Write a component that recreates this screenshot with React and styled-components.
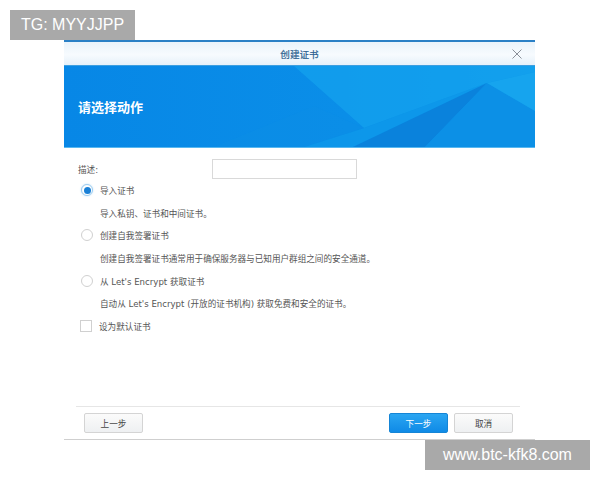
import styled, { createGlobalStyle } from "styled-components";

const GlobalStyle = createGlobalStyle`
  html, body {
    margin: 0;
    padding: 0;
    background: #ffffff;
  }
  body {
    font-family: "DejaVu Sans", "Noto Sans CJK SC", sans-serif;
  }
`;

const Page = styled.div`
  position: relative;
  width: 600px;
  height: 480px;
  overflow: hidden;
  padding: 40px 0 0 64px;
  box-sizing: border-box;
`;

const Watermark = styled.div`
  position: absolute;
  left: ${(p) => p.left}px;
  top: ${(p) => p.top}px;
  width: ${(p) => p.width}px;
  height: 30px;
  background: #a9a9a9;
  color: #ffffff;
  font-family: "Liberation Sans", sans-serif;
  font-size: 16px;
  display: flex;
  align-items: center;
  justify-content: center;
`;

const Dialog = styled.div`
  width: 471px;
  display: flex;
  flex-direction: column;
  border-top: 2px solid #2a80c6;
  border-bottom: 1px solid #cfcfcf;
  background: #ffffff;
`;

const TitleBar = styled.div`
  height: 23px;
  display: grid;
  grid-template-columns: 40px 1fr 40px;
  align-items: center;
  background: linear-gradient(#e9f3fb, #f7fbfe 55%, #e6f1fa);
  border-bottom: 1px solid #3d9fe0;
`;

const Title = styled.div`
  grid-column: 2;
  text-align: center;
  font-size: 9.6px;
  color: #2b5f8f;
  -webkit-text-stroke: 0.2px #2b5f8f;
`;

const Close = styled.div`
  grid-column: 3;
  justify-self: end;
  margin-right: 13px;
  width: 10px;
  height: 10px;
  display: flex;
`;

const Banner = styled.div`
  height: 81px;
  display: grid;
  border-bottom: 1px solid #58b8f0;
  overflow: hidden;
`;

const BannerArt = styled.svg`
  grid-area: 1 / 1;
  width: 471px;
  height: 81px;
`;

const BannerTitle = styled.div`
  grid-area: 1 / 1;
  align-self: center;
  padding-left: 14px;
  color: #ffffff;
  font-size: 13px;
  font-weight: bold;
`;

const Body = styled.div`
  height: 258px;
  padding: 10px 14px 0;
  box-sizing: border-box;
  color: #555555;
  font-size: 8.6px;
`;

const FieldRow = styled.div`
  display: grid;
  grid-template-columns: 134px 145px;
  align-items: center;
  height: 21px;
`;

const Input = styled.div`
  height: 20px;
  box-sizing: border-box;
  border: 1px solid #d9d9d9;
  background: #ffffff;
`;

const Line = styled.div`
  height: 22.6px;
  display: flex;
  align-items: center;
  padding-left: ${(p) => (p.indent ? 22 : 3)}px;
  gap: 7px;
`;

const Radio = styled.span`
  width: 12px;
  height: 12px;
  box-sizing: border-box;
  border-radius: 50%;
  border: 1px solid ${(p) => (p.checked ? "#9cccf0" : "#d0d0d0")};
  background: #ffffff;
  display: flex;
  align-items: center;
  justify-content: center;
  box-shadow: ${(p) => (p.checked ? "0 0 2px #bfe0f7" : "none")};

  &::after {
    content: "";
    width: 7px;
    height: 7px;
    border-radius: 50%;
    background: ${(p) => (p.checked ? "#1a80d6" : "transparent")};
  }
`;

const Checkbox = styled.span`
  width: 12px;
  height: 12px;
  margin-left: -1px;
  box-sizing: border-box;
  border: 1px solid #d0d0d0;
  background: #ffffff;
`;

const Separator = styled.div`
  height: 1px;
  margin: 0 15px 0 12px;
  background: #e6e6e6;
`;

const Footer = styled.div`
  height: 32px;
  display: flex;
  align-items: center;
  padding: 0 22px 0 20px;
  gap: 6px;
`;

const Spacer = styled.div`
  flex: 1;
`;

const Button = styled.div`
  width: 59px;
  height: 20px;
  box-sizing: border-box;
  border-radius: 2px;
  display: flex;
  align-items: center;
  justify-content: center;
  font-size: 8.6px;
  border: 1px solid ${(p) => (p.primary ? "#1585d6" : "#d4d4d4")};
  background: ${(p) =>
    p.primary
      ? "linear-gradient(#2aa6f2, #0f8ae6)"
      : "linear-gradient(#fbfbfb, #eef0f2)"};
  color: ${(p) => (p.primary ? "#ffffff" : "#444444")};
`;

export default function App() {
  return (
    <>
      <GlobalStyle />
      <Page>
        <Dialog>
          <TitleBar>
            <Title>创建证书</Title>
            <Close>
              <svg width="10" height="10" viewBox="0 0 10 10">
                <path d="M0.5 0.5 L9.5 9.5 M9.5 0.5 L0.5 9.5" stroke="#8a9099" strokeWidth="1" fill="none" />
              </svg>
            </Close>
          </TitleBar>
          <Banner>
            <BannerArt viewBox="0 0 471 81">
              <defs>
                <linearGradient id="bg" x1="0" y1="0" x2="1" y2="0">
                  <stop offset="0" stopColor="#0787e6" />
                  <stop offset="0.6" stopColor="#0a8ee8" />
                  <stop offset="1" stopColor="#0f99ea" />
                </linearGradient>
              </defs>
              <rect width="471" height="81" fill="url(#bg)" />
              <polygon points="230,0 471,0 471,6 423,17 300,62" fill="#14a2ee" opacity="0.7" />
              <polygon points="300,62 423,17 289,81 240,81" fill="#0e98ea" opacity="0.8" />
              <polygon points="423,17 289,81 361,81" fill="#0a82dc" />
              <polygon points="423,17 361,81 471,81 471,45" fill="#0c90e6" />
              <polygon points="423,17 471,6 471,45" fill="#16a4ee" />
              <polygon points="150,81 250,40 300,62 240,81" fill="#0b8de6" opacity="0.6" />
            </BannerArt>
            <BannerTitle>请选择动作</BannerTitle>
          </Banner>
          <Body>
            <FieldRow>
              <span>描述:</span>
              <Input />
            </FieldRow>
            <Line>
              <Radio checked />
              <span>导入证书</span>
            </Line>
            <Line indent>导入私钥、证书和中间证书。</Line>
            <Line>
              <Radio />
              <span>创建自我签署证书</span>
            </Line>
            <Line indent>创建自我签署证书通常用于确保服务器与已知用户群组之间的安全通道。</Line>
            <Line>
              <Radio />
              <span>从 Let's Encrypt 获取证书</span>
            </Line>
            <Line indent>自动从 Let's Encrypt (开放的证书机构) 获取免费和安全的证书。</Line>
            <Line>
              <Checkbox />
              <span>设为默认证书</span>
            </Line>
          </Body>
          <Separator />
          <Footer>
            <Button>上一步</Button>
            <Spacer />
            <Button primary>下一步</Button>
            <Button>取消</Button>
          </Footer>
        </Dialog>
        <Watermark left={10} top={10} width={125}>TG: MYYJJPP</Watermark>
        <Watermark left={425} top={440} width={165}>www.btc-kfk8.com</Watermark>
      </Page>
    </>
  );
}
